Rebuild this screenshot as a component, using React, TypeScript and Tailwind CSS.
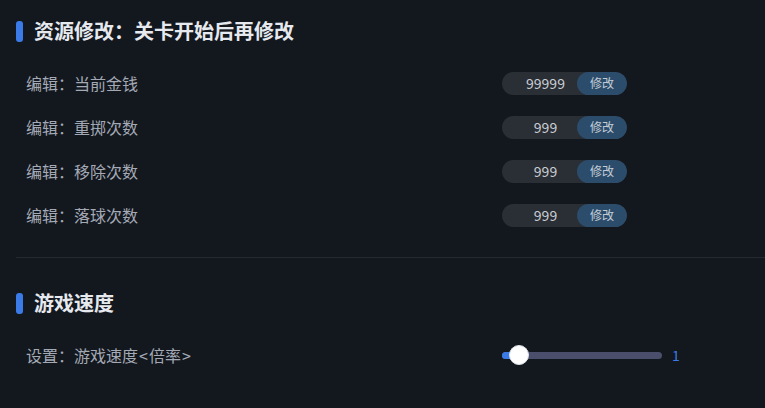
import { useState } from "react";

const rows = [
  { label: "编辑：当前金钱", value: "99999" },
  { label: "编辑：重掷次数", value: "999" },
  { label: "编辑：移除次数", value: "999" },
  { label: "编辑：落球次数", value: "999" },
];

function SectionTitle({ children }: { children: string }) {
  return (
    <div className="flex items-center h-[22px]">
      <span className="block w-[7px] h-[21px] rounded-[3px] bg-[#3b7be8]" />
      <h2 className="ml-[11px] text-[20px] leading-none font-bold text-[#e6e9ee]">{children}</h2>
    </div>
  );
}

function EditRow({ label, value }: { label: string; value: string }) {
  return (
    <div className="flex items-center h-[44px]">
      <div className="w-[486px] pl-[10px] text-[16px] text-[#a3aab5]">{label}</div>
      <div className="flex h-[23px] w-[125px] rounded-full bg-[#2a2e35] overflow-hidden">
        <div className="w-[75px] pl-[12px] flex items-center justify-center text-[14px] text-[#c9cdd3]">{value}</div>
        <button className="w-[50px] rounded-full bg-[#2c4c6c] text-[12px] text-[#c3ccd6]">修改</button>
      </div>
    </div>
  );
}

export default function App() {
  const [speed] = useState(1);
  return (
    <div
      className="w-[765px] h-[408px] bg-[#13171e] overflow-hidden pl-[16px]"
      style={{ fontFamily: '"Noto Sans CJK SC", "Noto Sans", sans-serif' }}
    >
      <div className="pt-[20px]">
        <SectionTitle>资源修改：关卡开始后再修改</SectionTitle>
      </div>
      <div className="mt-[19px]">
        {rows.map((r) => (
          <EditRow key={r.label} label={r.label} value={r.value} />
        ))}
      </div>
      <div className="mt-[20px] border-t border-[#262a30]" />
      <div className="pt-[34px]">
        <SectionTitle>游戏速度</SectionTitle>
      </div>
      <div className="flex items-center h-[44px] mt-[19px]">
        <div className="w-[486px] pl-[10px] text-[16px] text-[#a3aab5]">
          设置：游戏速度<span className="mx-[1px]">&lt;</span>倍率<span className="mx-[1px]">&gt;</span>
        </div>
        <div className="relative w-[160px] h-[7px] rounded-full bg-[#4b4f6b]">
          <div className="absolute left-0 top-0 h-[7px] w-[20px] rounded-full bg-[#3b7be8]" />
          <div className="absolute left-[7px] top-[-7px] w-[20px] h-[20px] rounded-full bg-white border border-[#dfe3ea]" />
        </div>
        <span className="ml-[10px] text-[14px] text-[#3b7be8]">{speed}</span>
      </div>
    </div>
  );
}
